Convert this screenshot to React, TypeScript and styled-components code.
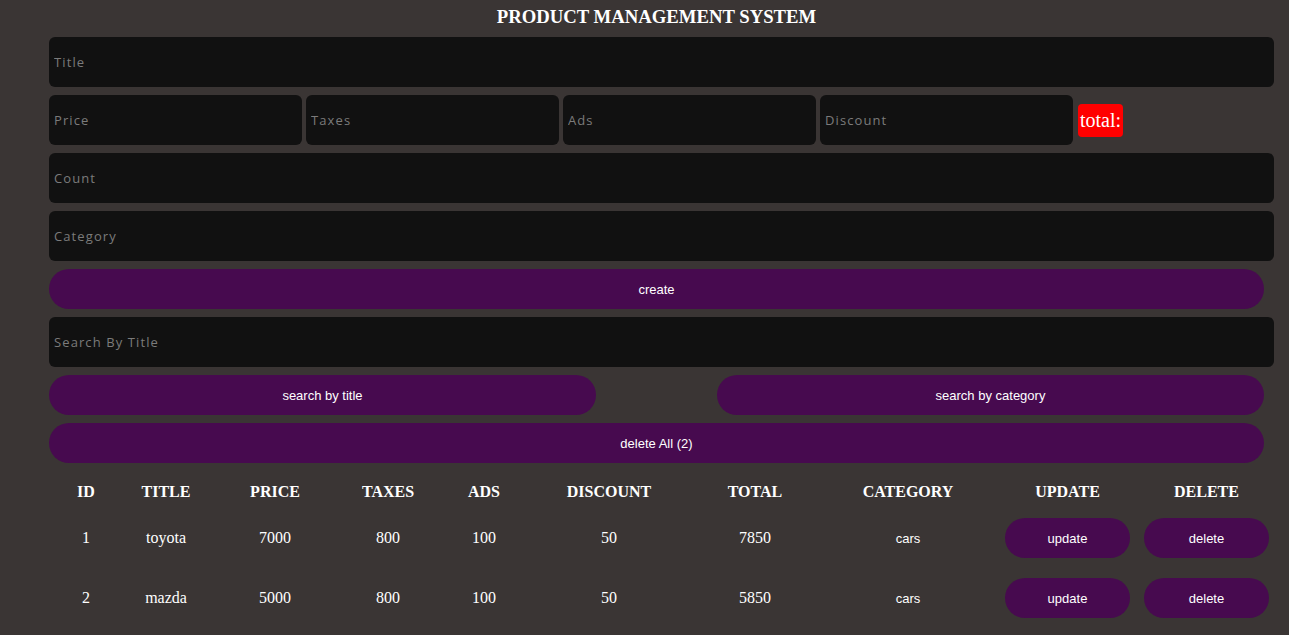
import React from "react";
import styled, { createGlobalStyle } from "styled-components";

const Global = createGlobalStyle`
  html, body { margin: 0; padding: 0; background: #3a3534; }
  body { font-family: "Liberation Serif", "Times New Roman", serif; color: #fff; }
`;

const Page = styled.div`
  width: 1289px;
  min-height: 635px;
  box-sizing: border-box;
  padding: 0 15px 0 49px;
`;

const Heading = styled.h2`
  width: 1215px;
  margin: 0 0 3px;
  height: 34px;
  line-height: 34px;
  text-align: center;
  font-family: "Liberation Serif", serif;
  font-weight: bold;
  font-size: 18.72px;
  color: #fff;
  text-transform: uppercase;
`;

const Field = styled.input<{ $w?: number }>`
  display: block;
  box-sizing: border-box;
  width: ${(p) => (p.$w ? `${p.$w}px` : "1225px")};
  height: 50px;
  margin: 0 0 8px;
  padding: 0 5px;
  border: none;
  outline: none;
  border-radius: 6px;
  background: #111111;
  color: #ddd;
  font-family: "Open Sans", sans-serif;
  font-size: 13px;
  letter-spacing: 1.1px;
  &::placeholder { color: #7b7b7b; }
`;

const PriceRow = styled.div`
  display: flex;
  align-items: center;
  gap: 4px;
  margin-bottom: 8px;
  & > input { margin: 0; }
`;

const Total = styled.small`
  margin-left: 1px;
  height: 33px;
  padding: 0 2px;
  border-radius: 4px;
  background: #ff0000;
  color: #fff;
  font-family: "Liberation Serif", serif;
  font-size: 20px;
  line-height: 33px;
`;

const PillButton = styled.button<{ $w?: number }>`
  display: block;
  width: ${(p) => (p.$w ? `${p.$w}px` : "1215px")};
  height: 40px;
  margin: 0 0 8px;
  border: none;
  border-radius: 20px;
  background: #470a4f;
  color: #fff;
  font-family: "Liberation Sans", Arial, sans-serif;
  font-size: 13px;
  cursor: pointer;
`;

const SearchRow = styled.div`
  display: flex;
  justify-content: space-between;
  width: 1215px;
  margin-bottom: 8px;
  & > button { margin-bottom: 0; }
`;

const Table = styled.table`
  width: 1220px;
  table-layout: fixed;
  border-collapse: collapse;
  margin-top: 12px;
`;

const Th = styled.th`
  height: 33px;
  padding: 0;
  font-family: "Liberation Serif", serif;
  font-weight: bold;
  font-size: 16px;
  text-transform: uppercase;
  text-align: center;
  color: #fff;
`;

const Td = styled.td<{ $sans?: boolean }>`
  height: 60px;
  padding: 0;
  text-align: center;
  font-family: ${(p) => (p.$sans ? `"Liberation Sans", Arial, sans-serif` : `"Liberation Serif", serif`)};
  font-size: ${(p) => (p.$sans ? "13px" : "16px")};
  color: #fff;
`;

const RowButton = styled.button`
  width: 125px;
  height: 40px;
  border: none;
  border-radius: 20px;
  background: #470a4f;
  color: #fff;
  font-family: "Liberation Sans", Arial, sans-serif;
  font-size: 13px;
  vertical-align: middle;
`;

const widths = [74, 86, 132, 94, 98, 152, 140, 166, 153, 125];
const headers = ["id", "title", "price", "taxes", "ads", "discount", "total", "category", "update", "delete"];

const rows = [
  { id: 1, title: "toyota", price: 7000, taxes: 800, ads: 100, discount: 50, total: 7850, category: "cars" },
  { id: 2, title: "mazda", price: 5000, taxes: 800, ads: 100, discount: 50, total: 5850, category: "cars" },
];

export default function App() {
  return (
    <Page>
      <Global />
      <Heading>Product Management System</Heading>
      <Field placeholder="Title" />
      <PriceRow>
        <Field $w={253} placeholder="Price" />
        <Field $w={253} placeholder="Taxes" />
        <Field $w={253} placeholder="Ads" />
        <Field $w={253} placeholder="Discount" />
        <Total>total:</Total>
      </PriceRow>
      <Field placeholder="Count" />
      <Field placeholder="Category" />
      <PillButton>create</PillButton>
      <Field placeholder="Search By Title" />
      <SearchRow>
        <PillButton $w={547}>search by title</PillButton>
        <PillButton $w={547}>search by category</PillButton>
      </SearchRow>
      <PillButton>delete All (2)</PillButton>
      <Table>
        <colgroup>
          {widths.map((w, i) => (
            <col key={i} style={{ width: w }} />
          ))}
        </colgroup>
        <thead>
          <tr>
            {headers.map((h) => (
              <Th key={h}>{h}</Th>
            ))}
          </tr>
        </thead>
        <tbody>
          {rows.map((r) => (
            <tr key={r.id}>
              <Td>{r.id}</Td>
              <Td>{r.title}</Td>
              <Td>{r.price}</Td>
              <Td>{r.taxes}</Td>
              <Td>{r.ads}</Td>
              <Td>{r.discount}</Td>
              <Td>{r.total}</Td>
              <Td $sans>{r.category}</Td>
              <Td>
                <RowButton>update</RowButton>
              </Td>
              <Td>
                <RowButton>delete</RowButton>
              </Td>
            </tr>
          ))}
        </tbody>
      </Table>
    </Page>
  );
}
